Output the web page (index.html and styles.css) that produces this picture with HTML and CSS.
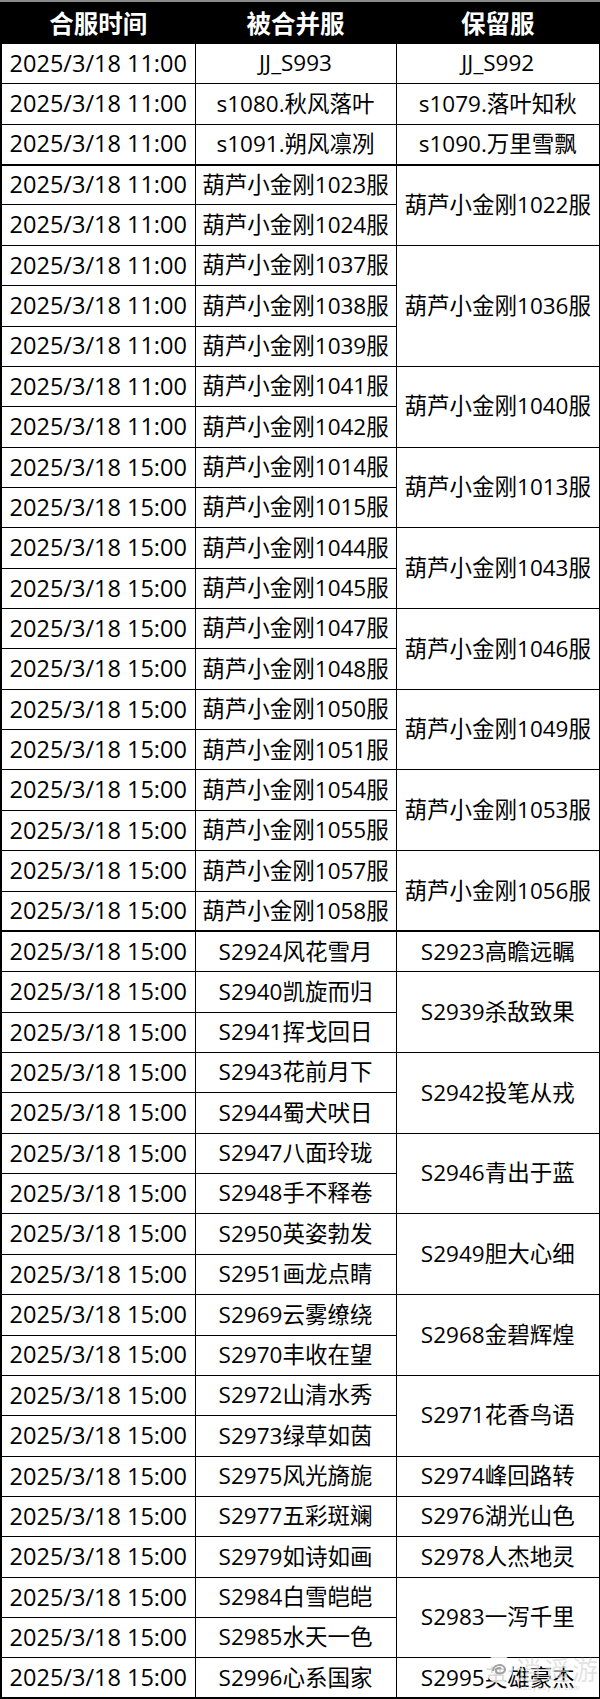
FILE: index.html
```html
<!DOCTYPE html>
<html lang="zh-CN">
<head>
<meta charset="utf-8">
<title>合服表</title>
<link rel="stylesheet" href="styles.css">
</head>
<body>
<div class="page">
<table class="merge">
<colgroup><col class="c1"><col class="c2"><col class="c3"></colgroup>
<thead>
<tr><th>合服时间</th><th>被合并服</th><th>保留服</th></tr>
</thead>
<tbody>
<tr><td>2025/3/18 11:00</td><td>JJ_S993</td><td>JJ_S992</td></tr>
<tr><td>2025/3/18 11:00</td><td>s1080.秋风落叶</td><td>s1079.落叶知秋</td></tr>
<tr><td>2025/3/18 11:00</td><td>s1091.朔风凛冽</td><td>s1090.万里雪飘</td></tr>
</tbody>
<tbody class="group">
<tr><td>2025/3/18 11:00</td><td>葫芦小金刚1023服</td><td rowspan="2">葫芦小金刚1022服</td></tr>
<tr><td>2025/3/18 11:00</td><td>葫芦小金刚1024服</td></tr>
<tr><td>2025/3/18 11:00</td><td>葫芦小金刚1037服</td><td rowspan="3">葫芦小金刚1036服</td></tr>
<tr><td>2025/3/18 11:00</td><td>葫芦小金刚1038服</td></tr>
<tr><td>2025/3/18 11:00</td><td>葫芦小金刚1039服</td></tr>
<tr><td>2025/3/18 11:00</td><td>葫芦小金刚1041服</td><td rowspan="2">葫芦小金刚1040服</td></tr>
<tr><td>2025/3/18 11:00</td><td>葫芦小金刚1042服</td></tr>
<tr><td>2025/3/18 15:00</td><td>葫芦小金刚1014服</td><td rowspan="2">葫芦小金刚1013服</td></tr>
<tr><td>2025/3/18 15:00</td><td>葫芦小金刚1015服</td></tr>
<tr><td>2025/3/18 15:00</td><td>葫芦小金刚1044服</td><td rowspan="2">葫芦小金刚1043服</td></tr>
<tr><td>2025/3/18 15:00</td><td>葫芦小金刚1045服</td></tr>
<tr><td>2025/3/18 15:00</td><td>葫芦小金刚1047服</td><td rowspan="2">葫芦小金刚1046服</td></tr>
<tr><td>2025/3/18 15:00</td><td>葫芦小金刚1048服</td></tr>
<tr><td>2025/3/18 15:00</td><td>葫芦小金刚1050服</td><td rowspan="2">葫芦小金刚1049服</td></tr>
<tr><td>2025/3/18 15:00</td><td>葫芦小金刚1051服</td></tr>
<tr><td>2025/3/18 15:00</td><td>葫芦小金刚1054服</td><td rowspan="2">葫芦小金刚1053服</td></tr>
<tr><td>2025/3/18 15:00</td><td>葫芦小金刚1055服</td></tr>
<tr><td>2025/3/18 15:00</td><td>葫芦小金刚1057服</td><td rowspan="2">葫芦小金刚1056服</td></tr>
<tr><td>2025/3/18 15:00</td><td>葫芦小金刚1058服</td></tr>
</tbody>
<tbody class="group">
<tr><td>2025/3/18 15:00</td><td>S2924风花雪月</td><td>S2923高瞻远瞩</td></tr>
<tr><td>2025/3/18 15:00</td><td>S2940凯旋而归</td><td rowspan="2">S2939杀敌致果</td></tr>
<tr><td>2025/3/18 15:00</td><td>S2941挥戈回日</td></tr>
<tr><td>2025/3/18 15:00</td><td>S2943花前月下</td><td rowspan="2">S2942投笔从戎</td></tr>
<tr><td>2025/3/18 15:00</td><td>S2944蜀犬吠日</td></tr>
<tr><td>2025/3/18 15:00</td><td>S2947八面玲珑</td><td rowspan="2">S2946青出于蓝</td></tr>
<tr><td>2025/3/18 15:00</td><td>S2948手不释卷</td></tr>
<tr><td>2025/3/18 15:00</td><td>S2950英姿勃发</td><td rowspan="2">S2949胆大心细</td></tr>
<tr><td>2025/3/18 15:00</td><td>S2951画龙点睛</td></tr>
<tr><td>2025/3/18 15:00</td><td>S2969云雾缭绕</td><td rowspan="2">S2968金碧辉煌</td></tr>
<tr><td>2025/3/18 15:00</td><td>S2970丰收在望</td></tr>
<tr><td>2025/3/18 15:00</td><td>S2972山清水秀</td><td rowspan="2">S2971花香鸟语</td></tr>
<tr><td>2025/3/18 15:00</td><td>S2973绿草如茵</td></tr>
<tr><td>2025/3/18 15:00</td><td>S2975风光旖旎</td><td>S2974峰回路转</td></tr>
<tr><td>2025/3/18 15:00</td><td>S2977五彩斑斓</td><td>S2976湖光山色</td></tr>
<tr><td>2025/3/18 15:00</td><td>S2979如诗如画</td><td>S2978人杰地灵</td></tr>
<tr><td>2025/3/18 15:00</td><td>S2984白雪皑皑</td><td rowspan="2">S2983一泻千里</td></tr>
<tr><td>2025/3/18 15:00</td><td>S2985水天一色</td></tr>
<tr><td>2025/3/18 15:00</td><td>S2996心系国家</td><td>S2995英雄豪杰</td></tr>
</tbody>
</table>
<div class="watermark">
<svg class="wm-logo" width="30" height="30" viewBox="0 0 30 30"><circle cx="15" cy="15" r="14" fill="rgba(255,255,255,0.85)"/><path d="M9 17 C9 10 20 9 21 15 C21 20 13 21 12 17 C11 14 16 13 17 15" fill="none" stroke="rgba(150,150,150,0.9)" stroke-width="2"/></svg>
<span class="wm-text">逍遥游</span>
<span class="wm-sub">xiaoyaoyou.com</span>
</div>
</div>
</body>
</html>
```
FILE: styles.css
```css
html, body {
  margin: 0;
  padding: 0;
  background: #ffffff;
}
.page {
  position: relative;
  width: 600px;
  border-top: 2px solid #8a8a8a;
}
.merge {
  width: 599px;
  border-collapse: collapse;
  table-layout: fixed;
  border: 2px solid #000;
  font-family: "Open Sans", "Noto Sans CJK SC", sans-serif;
  color: #000;
}
.c1 { width: 194px; }
.c2 { width: 201px; }
.c3 { width: 204px; }
.merge th {
  background: #000;
  color: #fff;
  font-family: "Noto Sans CJK SC", sans-serif;
  font-weight: 700;
  font-size: 24.5px;
  height: 39px;
  padding: 0;
  border: 1px solid #000;
  line-height: 1;
}
.merge td {
  border: 1px solid #000;
  text-align: center;
  vertical-align: middle;
  font-size: 22.5px;
  padding: 0;
  line-height: 1;
  white-space: nowrap;
}
.merge td:first-child {
  font-size: 23.5px;
}
.merge tbody tr {
  height: 40.36px;
}
.merge tbody.group tr:first-child td {
  border-top: 2px solid #000;
}
.watermark {
  position: absolute;
  left: 484px;
  top: 1652px;
  display: flex;
  align-items: center;
  gap: 2px;
  pointer-events: none;
}
.wm-logo { display: block; }
.wm-text {
  font-family: "Noto Sans CJK SC", sans-serif;
  font-size: 26px;
  color: rgba(215, 215, 215, 0.7);
  letter-spacing: 2px;
  line-height: 1;
}
.wm-sub {
  position: absolute;
  left: 32px;
  top: 30px;
  font-family: "Liberation Sans", sans-serif;
  font-size: 7px;
  line-height: 1;
  color: rgba(200, 200, 200, 0.7);
  letter-spacing: 1px;
}
```
